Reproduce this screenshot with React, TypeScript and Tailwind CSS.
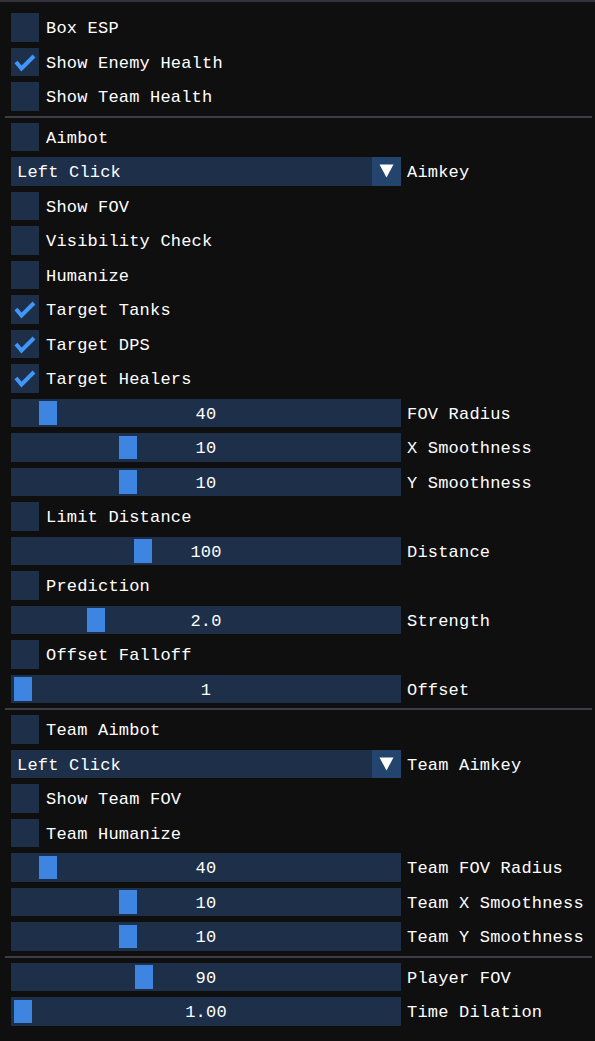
import React from 'react';

type Item =
  | { kind: 'check'; label: string; checked?: boolean }
  | { kind: 'combo'; value: string; label: string }
  | { kind: 'slider'; value: string; label: string; grab: number }
  | { kind: 'sep' };

// grab = left offset of the slider handle inside the frame, px
const items: Item[] = [
  { kind: 'check', label: 'Box ESP' },
  { kind: 'check', label: 'Show Enemy Health', checked: true },
  { kind: 'check', label: 'Show Team Health' },
  { kind: 'sep' },
  { kind: 'check', label: 'Aimbot' },
  { kind: 'combo', value: 'Left Click', label: 'Aimkey' },
  { kind: 'check', label: 'Show FOV' },
  { kind: 'check', label: 'Visibility Check' },
  { kind: 'check', label: 'Humanize' },
  { kind: 'check', label: 'Target Tanks', checked: true },
  { kind: 'check', label: 'Target DPS', checked: true },
  { kind: 'check', label: 'Target Healers', checked: true },
  { kind: 'slider', value: '40', label: 'FOV Radius', grab: 28 },
  { kind: 'slider', value: '10', label: 'X Smoothness', grab: 108 },
  { kind: 'slider', value: '10', label: 'Y Smoothness', grab: 108 },
  { kind: 'check', label: 'Limit Distance' },
  { kind: 'slider', value: '100', label: 'Distance', grab: 123 },
  { kind: 'check', label: 'Prediction' },
  { kind: 'slider', value: '2.0', label: 'Strength', grab: 76 },
  { kind: 'check', label: 'Offset Falloff' },
  { kind: 'slider', value: '1', label: 'Offset', grab: 3 },
  { kind: 'sep' },
  { kind: 'check', label: 'Team Aimbot' },
  { kind: 'combo', value: 'Left Click', label: 'Team Aimkey' },
  { kind: 'check', label: 'Show Team FOV' },
  { kind: 'check', label: 'Team Humanize' },
  { kind: 'slider', value: '40', label: 'Team FOV Radius', grab: 28 },
  { kind: 'slider', value: '10', label: 'Team X Smoothness', grab: 108 },
  { kind: 'slider', value: '10', label: 'Team Y Smoothness', grab: 108 },
  { kind: 'sep' },
  { kind: 'slider', value: '90', label: 'Player FOV', grab: 124 },
  { kind: 'slider', value: '1.00', label: 'Time Dilation', grab: 3 },
];

const CheckMark = () => (
  <svg width="28" height="28" viewBox="0 0 28 28">
    <polyline
      points="5,14 10.5,20.5 23,8"
      fill="none"
      stroke="#4296fa"
      strokeWidth="4"
      strokeLinejoin="miter"
    />
  </svg>
);

const Row: React.FC<{ item: Item }> = ({ item }) => {
  switch (item.kind) {
    case 'sep':
      return <div className="w-[587px] ml-[-6px] h-[2px] my-[-1px] bg-[#3e3e47]" />;

    case 'check':
      return (
        <div className="flex items-center h-[28.5px]">
          <div className="w-[28px] h-full bg-[#1d2f49] flex items-center justify-center">
            {item.checked && <CheckMark />}
          </div>
          <span className="ml-[7px] pt-[3px]">{item.label}</span>
        </div>
      );

    case 'combo':
      return (
        <div className="flex items-center h-[28.5px]">
          <div className="w-[390px] h-full flex">
            <div className="flex-1 bg-[#1d2f49] flex items-center pl-[6px] pt-[3px]">{item.value}</div>
            <div className="w-[29px] h-full bg-[#23456d] flex items-center justify-center">
              <svg width="15" height="14" viewBox="0 0 15 14">
                <polygon points="0.5,0.5 14.5,0.5 7.5,13.5" fill="#ffffff" />
              </svg>
            </div>
          </div>
          <span className="ml-[6px] pt-[3px]">{item.label}</span>
        </div>
      );

    case 'slider':
      return (
        <div className="flex items-center h-[28.5px]">
          <div className="relative w-[390px] h-full bg-[#1d2f49] flex items-center justify-center">
            <div
              className="absolute top-[2.5px] bottom-[2.5px] w-[18px] bg-[#3d85e0]"
              style={{ left: item.grab }}
            />
            <span className="relative pt-[3px]">{item.value}</span>
          </div>
          <span className="ml-[6px] pt-[3px]">{item.label}</span>
        </div>
      );

    default:
      return null;
  }
};

export default function App() {
  return (
    <div
      className="w-[595px] h-[1041px] bg-[#0f0f0f] border-t-2 border-[#34323f] text-white text-[17px] tracking-[0.2px] leading-none overflow-hidden"
      style={{ fontFamily: '"Liberation Mono", "DejaVu Sans Mono", monospace' }}
    >
      <div className="flex flex-col gap-[6px] pl-[11px] pt-[11px]">
        {items.map((item, i) => (
          <Row key={i} item={item} />
        ))}
      </div>
    </div>
  );
}
